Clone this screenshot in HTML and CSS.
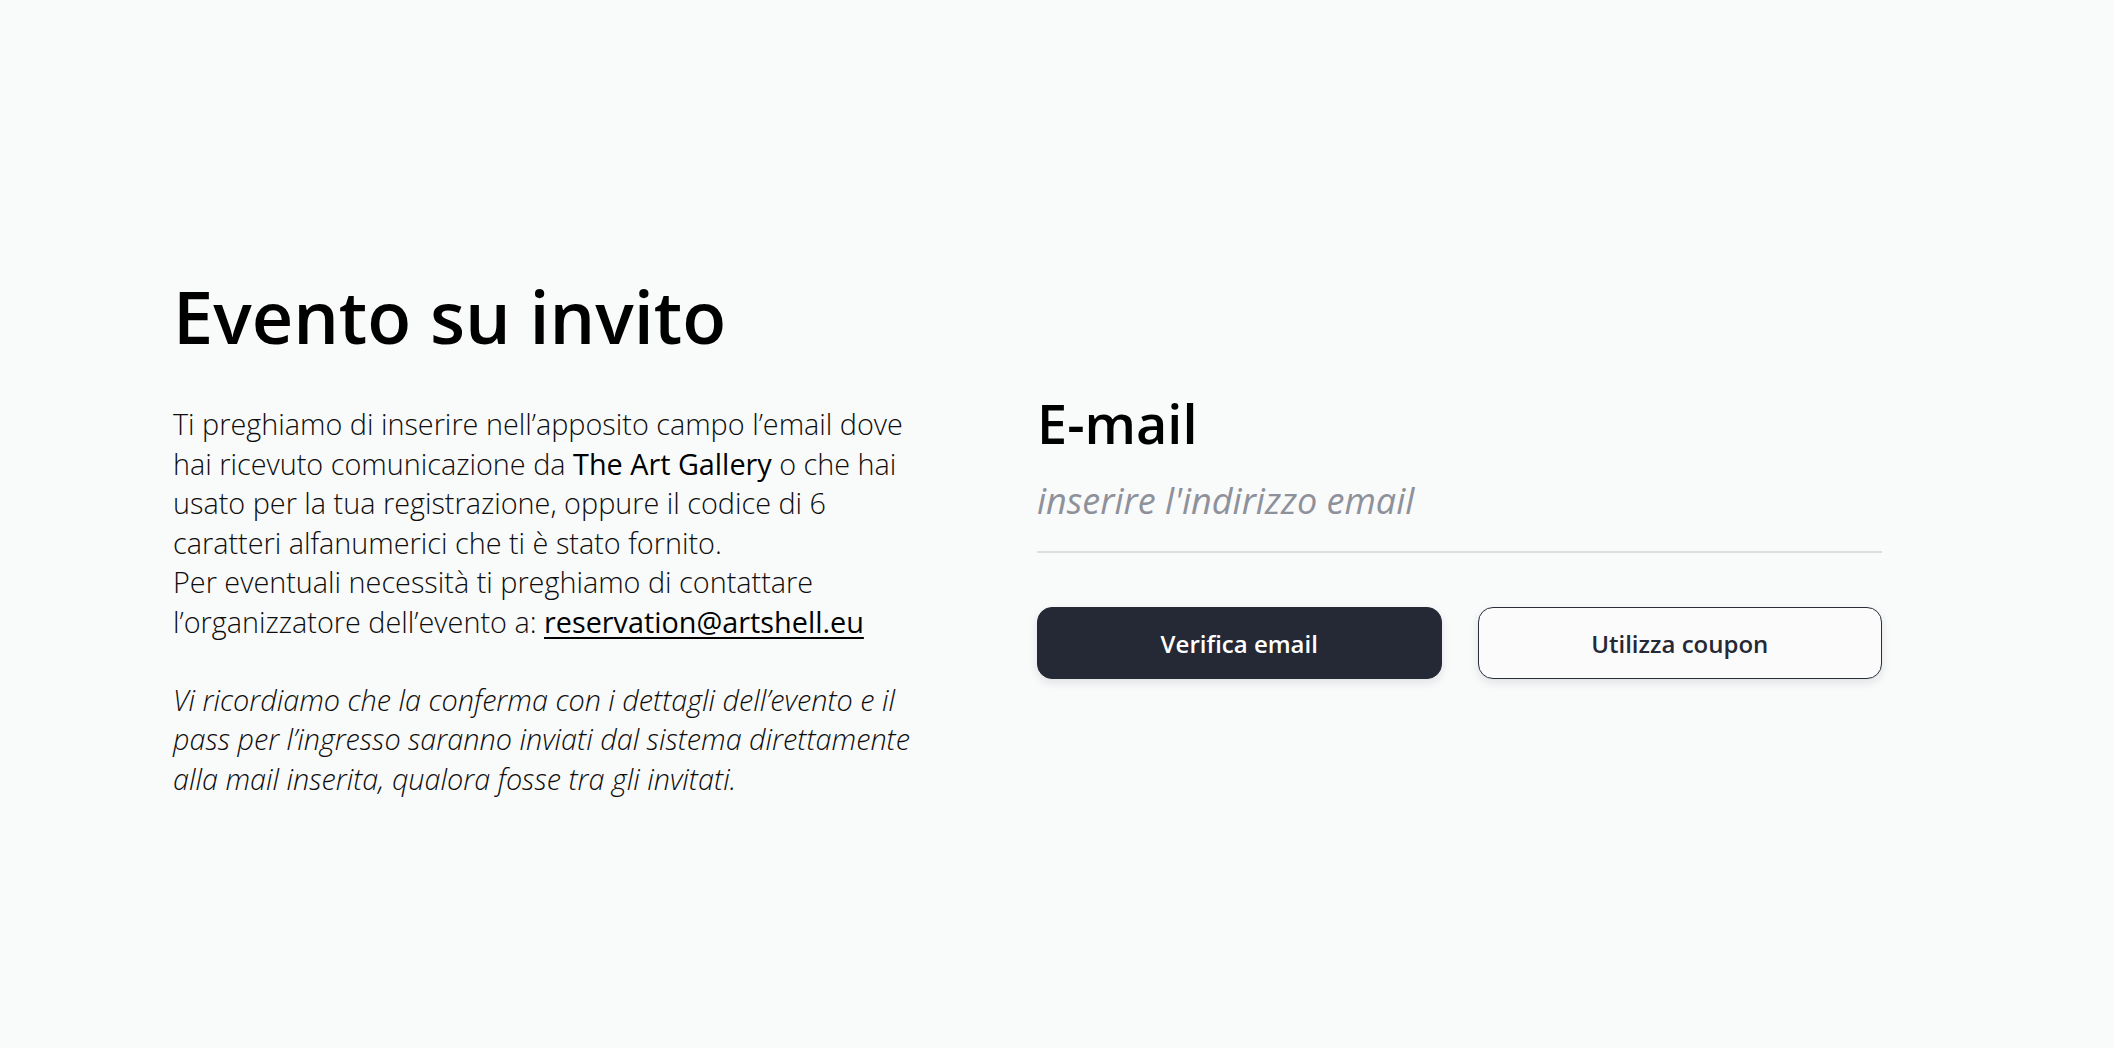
FILE: index.html
```html
<!DOCTYPE html>
<html lang="it">
<head>
<meta charset="utf-8">
<title>Evento su invito</title>
<link rel="stylesheet" href="styles.css">
</head>
<body>
<main class="page">
  <section class="intro">
    <h1 class="title">Evento su invito</h1>
    <p class="text">Ti preghiamo di inserire nell’apposito campo l’email dove hai ricevuto comunicazione da <strong class="brand">The Art Gallery</strong> o che hai usato per la tua registrazione, oppure il codice di 6 caratteri alfanumerici che ti è stato fornito.<br>Per eventuali necessità ti preghiamo di contattare l’organizzatore dell’evento a: <a class="mail" href="mailto:reservation@artshell.eu">reservation@artshell.eu</a></p>
    <p class="text note">Vi ricordiamo che la conferma con i dettagli dell’evento e il pass per l’ingresso saranno inviati dal sistema direttamente alla mail inserita, qualora fosse tra gli invitati.</p>
  </section>
  <section class="form">
    <label class="label" for="email">E-mail</label>
    <input class="input" id="email" type="email" placeholder="inserire l'indirizzo email">
    <div class="actions">
      <button class="btn btn-primary" type="button">Verifica email</button>
      <button class="btn btn-outline" type="button">Utilizza coupon</button>
    </div>
  </section>
</main>
</body>
</html>
```
FILE: styles.css
```css
* { box-sizing: border-box; }
html, body { margin: 0; padding: 0; }
body {
  background: #f9fafa;
  font-family: "Open Sans", "Noto Sans", sans-serif;
  color: #161616;
  width: 2114px;
  height: 1048px;
  overflow: hidden;
}
.page {
  display: flex;
  align-items: flex-start;
  padding: 273px 0 0 173px;
}
.intro {
  width: 765px;
  flex: none;
}
.title {
  margin: 0;
  font-size: 72px;
  line-height: 86px;
  font-weight: 600;
  color: #000;
  letter-spacing: 0;
}
.text {
  margin: 45px 0 0;
  font-size: 28.8px;
  line-height: 39.6px;
  font-weight: 300;
  color: #0d0d0d;
}
.brand {
  font-weight: 400;
  color: #000;
}
.mail {
  color: #000;
  font-weight: 400;
  text-decoration: underline;
  text-underline-offset: 4px;
  text-decoration-thickness: 2px;
}
.note {
  margin-top: 38px;
  font-style: italic;
}
.form {
  flex: none;
  width: 845px;
  margin-left: 99px;
  margin-top: 117px;
  display: flex;
  flex-direction: column;
}
.label {
  font-size: 54px;
  line-height: 67px;
  font-weight: 600;
  color: #000;
}
.input {
  margin-top: 20px;
  border: none;
  border-bottom: 2px solid #dcdfe2;
  background: transparent;
  padding: 0 0 28px;
  font-family: inherit;
  font-size: 36px;
  line-height: 46px;
  height: 76px;
  font-weight: 400;
  font-style: italic;
  outline: none;
  width: 100%;
}
.input::placeholder {
  color: #8e919a;
  font-style: italic;
  font-weight: 400;
}
.actions {
  margin-top: 54px;
  display: flex;
  gap: 36px;
}
.btn {
  flex: 1;
  height: 72px;
  border-radius: 15px;
  font-family: inherit;
  font-size: 24px;
  font-weight: 600;
  cursor: pointer;
  box-shadow: 0 4px 10px rgba(20, 24, 35, 0.10);
}
.btn-primary {
  background: #252935;
  color: #fff;
  border: 1px solid #252935;
}
.btn-outline {
  background: #fbfbfc;
  color: #252935;
  border: 1px solid #2a2e3b;
}
```
